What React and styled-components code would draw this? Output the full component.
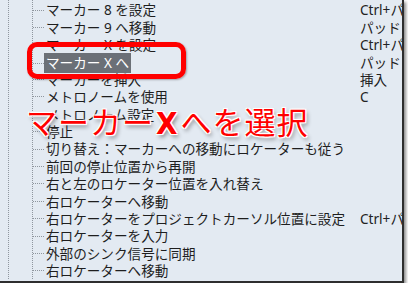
import styled, { createGlobalStyle } from 'styled-components';

const GlobalStyle = createGlobalStyle`
    body {
        margin: 0;
        background: #ffffff;
        font-family: "Noto Sans", "Noto Sans CJK JP", sans-serif;
    }
`;

const Frame = styled.div`
    position: relative;
    width: 402px;
    height: 281px;
    overflow: hidden;
    background-color: #e3eaf2;
    border-right: 2px solid #2e2e2e;
    border-bottom: 2px solid #2e2e2e;
    box-shadow: 2px 2px 3px rgba(0, 0, 0, 0.45);
`;

/* две пунктирные вертикали дерева слева */
const Tree = styled.div`
    display: flex;
    flex-direction: column;
    padding-top: 1.3px;
    background-image:
        linear-gradient(#8f969e 50%, transparent 50%),
        linear-gradient(#8f969e 50%, transparent 50%);
    background-size: 1px 2px, 1px 2px;
    background-position: 8px 0, 32px 0;
    background-repeat: repeat-y;
`;

const Row = styled.div`
    display: grid;
    grid-template-columns: 46px 314px auto;
    align-items: center;
    height: 17.4px;
    font-size: 13.6px;
    line-height: 17.4px;
    color: #1e1e1e;
    white-space: nowrap;
`;

const Connector = styled.div`
    margin-left: 33px;
    width: 11px;
    border-top: 1px dotted #8f969e;
`;

const Label = styled.span`
    justify-self: start;
    margin-left: ${p => (p.$selected ? '-2px' : '0')};
    padding: ${p => (p.$selected ? '1px 2px' : '0')};
    background-color: ${p => (p.$selected ? '#6b7077' : 'transparent')};
    color: ${p => (p.$selected ? '#ffffff' : 'inherit')};
`;

const Shortcut = styled.span`
    color: #222222;
`;

const Callout = styled.div`
    position: absolute;
    left: 27px;
    top: 42px;
    width: 159px;
    height: 37px;
    box-sizing: border-box;
    border: 5px solid #ff0000;
    border-radius: 10px;
    box-shadow: 1px 1px 2px rgba(0, 0, 0, 0.3);
`;

const Caption = styled.div`
    position: absolute;
    left: 26px;
    top: 102px;
    font-size: 31px;
    line-height: 38px;
    letter-spacing: 1px;
    color: #ff0000;
    white-space: nowrap;
    font-family: "Noto Sans CJK JP", sans-serif;
    text-shadow:
        -1px -1px 0 #fff, 1px -1px 0 #fff, -1px 1px 0 #fff, 1px 1px 0 #fff,
        0 0 3px #fff, 2px 3px 4px rgba(0, 0, 0, 0.45);
`;

const BoldX = styled.span`
    font-family: "DejaVu Sans Condensed", "Liberation Sans Narrow", sans-serif;
    font-weight: 900;
    margin: 0 2px;
`;

const items = [
    ['マーカー 8 を設定', 'Ctrl+パッド 8'],
    ['マーカー 9 へ移動', 'パッド 9'],
    ['マーカー X を設定', 'Ctrl+パッド X'],
    ['マーカー X へ', 'パッド X', true],
    ['マーカーを挿入', '挿入'],
    ['メトロノームを使用', 'C'],
    ['メトロノーム設定', ''],
    ['停止', ''],
    ['切り替え：マーカーへの移動にロケーターも従う', ''],
    ['前回の停止位置から再開', ''],
    ['右と左のロケーター位置を入れ替え', ''],
    ['右ロケーターへ移動', ''],
    ['右ロケーターをプロジェクトカーソル位置に設定', 'Ctrl+パッド 2'],
    ['右ロケーターを入力', ''],
    ['外部のシンク信号に同期', ''],
    ['右ロケーターへ移動', ''],
];

function App() {
    return (
        <>
            <GlobalStyle/>
            <Frame>
                <Tree>
                    {items.map(([label, key, selected], i) => (
                        <Row key={i}>
                            <Connector/>
                            <Label $selected={selected}>{label}</Label>
                            <Shortcut>{key}</Shortcut>
                        </Row>
                    ))}
                </Tree>
                <Callout/>
                <Caption>マーカー<BoldX>X</BoldX>へを選択</Caption>
            </Frame>
        </>
    );
}

export default App;
